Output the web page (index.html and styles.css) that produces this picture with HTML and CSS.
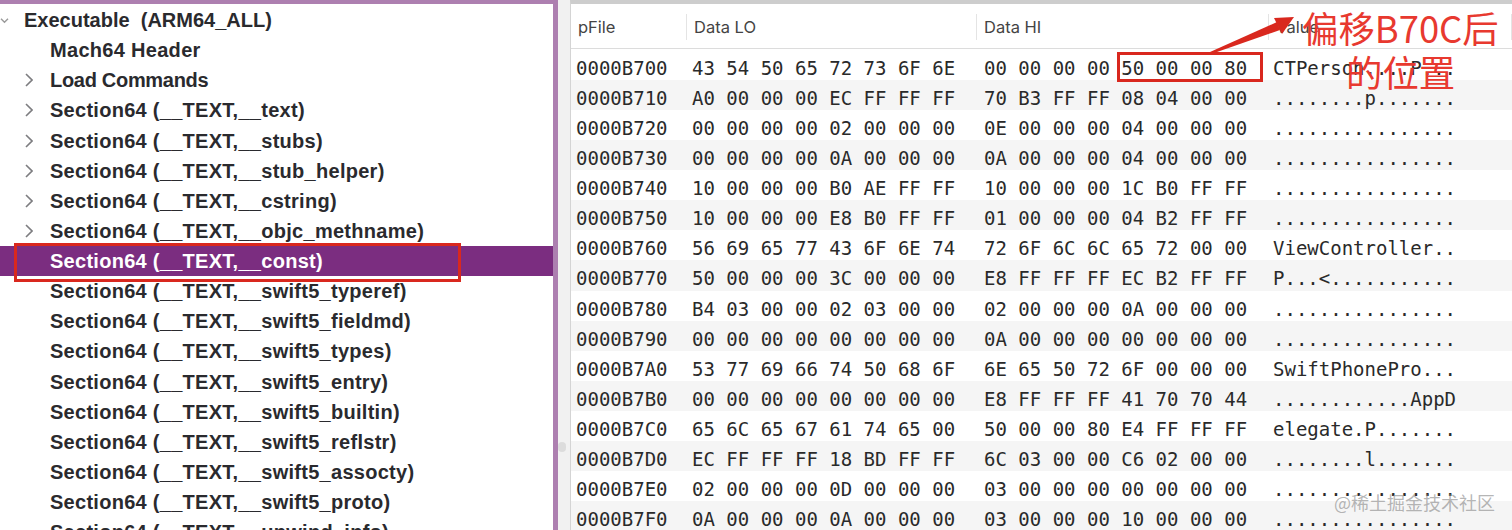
FILE: index.html
```html
<!DOCTYPE html>
<html lang="zh">
<head>
<meta charset="utf-8">
<title>MachOView</title>
<link rel="stylesheet" href="styles.css">
</head>
<body>
<div class="app">
  <aside class="side">
    <div class="node root"><svg class="chev down" viewBox="0 0 10 8"><path d="M1 2l4 4 4-4"/></svg>Executable &nbsp;(ARM64_ALL)</div>
    <div class="node mach">Mach64 Header</div>
    <div class="node load"><svg class="chev" viewBox="0 0 8 14"><path d="M1 1l6 6-6 6"/></svg>Load Commands</div>
    <div class="node sec"><svg class="chev" viewBox="0 0 8 14"><path d="M1 1l6 6-6 6"/></svg>Section64 (__TEXT,__text)</div>
    <div class="node sec"><svg class="chev" viewBox="0 0 8 14"><path d="M1 1l6 6-6 6"/></svg>Section64 (__TEXT,__stubs)</div>
    <div class="node sec"><svg class="chev" viewBox="0 0 8 14"><path d="M1 1l6 6-6 6"/></svg>Section64 (__TEXT,__stub_helper)</div>
    <div class="node sec"><svg class="chev" viewBox="0 0 8 14"><path d="M1 1l6 6-6 6"/></svg>Section64 (__TEXT,__cstring)</div>
    <div class="node sec"><svg class="chev" viewBox="0 0 8 14"><path d="M1 1l6 6-6 6"/></svg>Section64 (__TEXT,__objc_methname)</div>
    <div class="node sec sel">Section64 (__TEXT,__const)</div>
    <div class="node sec">Section64 (__TEXT,__swift5_typeref)</div>
    <div class="node sec">Section64 (__TEXT,__swift5_fieldmd)</div>
    <div class="node sec">Section64 (__TEXT,__swift5_types)</div>
    <div class="node sec">Section64 (__TEXT,__swift5_entry)</div>
    <div class="node sec">Section64 (__TEXT,__swift5_builtin)</div>
    <div class="node sec">Section64 (__TEXT,__swift5_reflstr)</div>
    <div class="node sec">Section64 (__TEXT,__swift5_assocty)</div>
    <div class="node sec">Section64 (__TEXT,__swift5_proto)</div>
    <div class="node sec">Section64 (__TEXT,__unwind_info)</div>
  </aside>
  <div class="gutter"><span class="thumb"></span></div>
  <main class="pane">
    <div class="head">
      <span class="hc c1">pFile</span><span class="hc c2">Data LO</span><span class="hc c3">Data HI</span><span class="hc c4">Value</span>
    </div>
    <div class="row"><span class="c1">0000B700</span><span class="c2">43 54 50 65 72 73 6F 6E</span><span class="c3">00 00 00 00 50 00 00 80</span><span class="c4">CTPerson....P...</span></div>
    <div class="row"><span class="c1">0000B710</span><span class="c2">A0 00 00 00 EC FF FF FF</span><span class="c3">70 B3 FF FF 08 04 00 00</span><span class="c4">........p.......</span></div>
    <div class="row"><span class="c1">0000B720</span><span class="c2">00 00 00 00 02 00 00 00</span><span class="c3">0E 00 00 00 04 00 00 00</span><span class="c4">................</span></div>
    <div class="row"><span class="c1">0000B730</span><span class="c2">00 00 00 00 0A 00 00 00</span><span class="c3">0A 00 00 00 04 00 00 00</span><span class="c4">................</span></div>
    <div class="row"><span class="c1">0000B740</span><span class="c2">10 00 00 00 B0 AE FF FF</span><span class="c3">10 00 00 00 1C B0 FF FF</span><span class="c4">................</span></div>
    <div class="row"><span class="c1">0000B750</span><span class="c2">10 00 00 00 E8 B0 FF FF</span><span class="c3">01 00 00 00 04 B2 FF FF</span><span class="c4">................</span></div>
    <div class="row"><span class="c1">0000B760</span><span class="c2">56 69 65 77 43 6F 6E 74</span><span class="c3">72 6F 6C 6C 65 72 00 00</span><span class="c4">ViewController..</span></div>
    <div class="row"><span class="c1">0000B770</span><span class="c2">50 00 00 00 3C 00 00 00</span><span class="c3">E8 FF FF FF EC B2 FF FF</span><span class="c4">P...&lt;...........</span></div>
    <div class="row"><span class="c1">0000B780</span><span class="c2">B4 03 00 00 02 03 00 00</span><span class="c3">02 00 00 00 0A 00 00 00</span><span class="c4">................</span></div>
    <div class="row"><span class="c1">0000B790</span><span class="c2">00 00 00 00 00 00 00 00</span><span class="c3">0A 00 00 00 00 00 00 00</span><span class="c4">................</span></div>
    <div class="row"><span class="c1">0000B7A0</span><span class="c2">53 77 69 66 74 50 68 6F</span><span class="c3">6E 65 50 72 6F 00 00 00</span><span class="c4">SwiftPhonePro...</span></div>
    <div class="row"><span class="c1">0000B7B0</span><span class="c2">00 00 00 00 00 00 00 00</span><span class="c3">E8 FF FF FF 41 70 70 44</span><span class="c4">............AppD</span></div>
    <div class="row"><span class="c1">0000B7C0</span><span class="c2">65 6C 65 67 61 74 65 00</span><span class="c3">50 00 00 80 E4 FF FF FF</span><span class="c4">elegate.P.......</span></div>
    <div class="row"><span class="c1">0000B7D0</span><span class="c2">EC FF FF FF 18 BD FF FF</span><span class="c3">6C 03 00 00 C6 02 00 00</span><span class="c4">........l.......</span></div>
    <div class="row"><span class="c1">0000B7E0</span><span class="c2">02 00 00 00 0D 00 00 00</span><span class="c3">03 00 00 00 00 00 00 00</span><span class="c4">................</span></div>
    <div class="row"><span class="c1">0000B7F0</span><span class="c2">0A 00 00 00 0A 00 00 00</span><span class="c3">03 00 00 00 10 00 00 00</span><span class="c4">................</span></div>
  </main>
</div>
<div class="box box-side"></div>
<div class="box box-hex"></div>
<svg class="arrow" viewBox="0 0 100 50"><path d="M2 42L69 12L72 20L9 42Z" class="tip"/><path d="M86 7L66 8L74 24Z" class="tip"/></svg>
<div class="note n1">偏移B70C后</div>
<div class="note n2">的位置</div>
<div class="mark">@稀土掘金技术社区</div>
</body>
</html>
```
FILE: styles.css
```css
* { box-sizing: border-box; }
html, body { margin: 0; height: 530px; overflow: hidden; background: #fff; }
.app { display: flex; height: 530px; overflow: hidden; }
.side {
  width: 558px; flex: none; height: 530px; overflow: hidden;
  border-top: 4px solid #ad7fb0; border-right: 5px solid #ad7fb0;
  padding-top: 1px; background: #fff;
  font: 700 20px/30.14px "Liberation Sans", sans-serif; color: #2a2a2e;
}
.node { height: 30.14px; padding-left: 50px; position: relative; white-space: nowrap; }
.root { padding-left: 24px; }
.mach { letter-spacing: .3px; }
.load { letter-spacing: -.3px; }
.sec { letter-spacing: .28px; }
.sel { background: #7b2d80; color: #fff; }
.chev { position: absolute; left: 25px; top: 8px; width: 8px; height: 14px; fill: none; stroke: #7d7d80; stroke-width: 1.6; }
.chev.down { left: 0; top: 12px; width: 9px; height: 7px; stroke: #9a9a9a; }
.gutter { width: 12px; flex: none; background: #f1f1f1; position: relative; }
.thumb { position: absolute; left: 0; top: 442px; width: 8px; height: 10px; border-radius: 4px; background: #dcdcdc; }
.pane { flex: 1; border-top: 4px solid #cdcdcd; border-left: 1px solid #d4d4d4; background: #fff; overflow: hidden; }
.head {
  display: flex; height: 45px; border-bottom: 1px solid #dcdcdc; margin-bottom: 1px; align-items: center;
  font: 400 16.5px Inter, "Liberation Sans", sans-serif; color: #444; padding-top: 2px;
}
.hc { padding-left: 7px; position: relative; height: 26px; line-height: 26px; border-right: 1px solid #e4e4e4; }
.row {
  display: flex; height: 30.07px; white-space: pre;
  font: 400 19px/36px "DejaVu Sans Mono", "Liberation Mono", monospace; color: #2a2a2a;
  overflow: hidden;
}
.row:nth-child(odd) { background: #f5f5f5; }
.row > span { padding-left: 5px; }
.c1 { width: 116px; flex: none; }
.c2 { width: 290px; flex: none; }
.c3 { width: 292px; flex: none; }
.c4 { flex: 1; }
.row .c2 { padding-left: 5px; }
.row .c3 { padding-left: 7px; }
.row .c4 { padding-left: 4px; }
.box { position: absolute; border: 3.5px solid #d9281e; }
.box-side { left: 14px; top: 243px; width: 447px; height: 39px; }
.box-hex { left: 1117px; top: 52px; width: 146px; height: 30px; }
.arrow { position: absolute; left: 1208px; top: 10px; width: 100px; height: 50px; overflow: visible; }
.tip { fill: #d9281e; }
.note { position: absolute; font: 400 36.4px/44px "Noto Sans CJK SC", sans-serif; color: #e8392f; white-space: nowrap; }
.n1 { left: 1302px; top: 5px; }
.n2 { left: 1346px; top: 49px; }
.mark { position: absolute; left: 1334px; top: 490px; font: 400 18px/24px "Noto Sans CJK SC", sans-serif; color: rgba(150,150,150,.7); white-space: nowrap; }
```
